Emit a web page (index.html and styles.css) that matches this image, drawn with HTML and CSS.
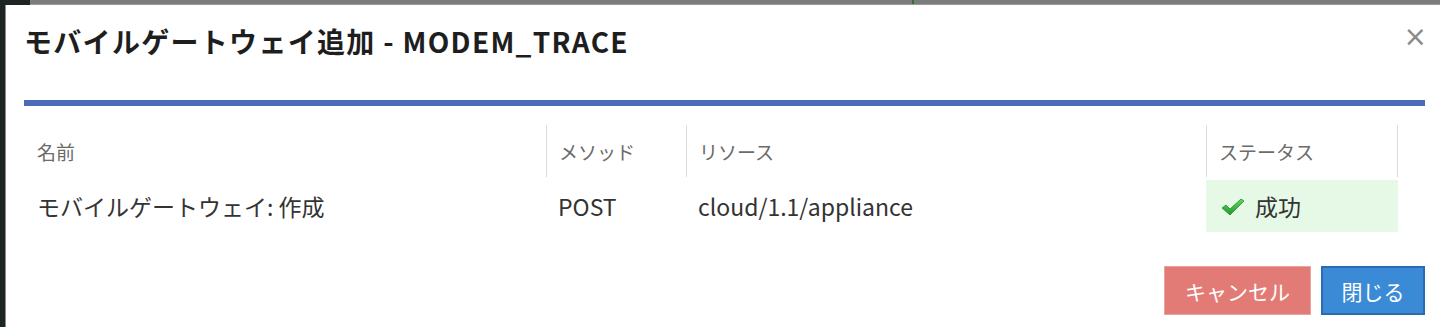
FILE: index.html
```html
<!DOCTYPE html>
<html lang="ja">
<head>
<meta charset="UTF-8">
<title>モバイルゲートウェイ追加</title>
<link rel="stylesheet" href="styles.css">
</head>
<body>
  <div class="topbar">
    <div class="topbar-dark"></div>
    <div class="topbar-gray"><span class="topbar-mark"></span></div>
  </div>
  <div class="main">
    <div class="side"></div>
    <div class="dialog">
      <div class="dialog-header">
        <h2 class="dialog-title">モバイルゲートウェイ追加 - MODEM_TRACE</h2>
        <span class="close">&times;</span>
      </div>
      <div class="progress"></div>
      <div class="result-table">
        <div class="row head">
          <div class="cell c-name">名前</div>
          <div class="cell c-method">メソッド</div>
          <div class="cell c-resource">リソース</div>
          <div class="cell c-status">ステータス</div>
        </div>
        <div class="row body">
          <div class="cell c-name">モバイルゲートウェイ: 作成</div>
          <div class="cell c-method">POST</div>
          <div class="cell c-resource">cloud/1.1/appliance</div>
          <div class="cell c-status ok">
            <svg class="check" width="24" height="20" viewBox="0 0 24 20">
              <defs>
                <linearGradient id="g" x1="0" y1="0" x2="0" y2="1">
                  <stop offset="0" stop-color="#5fd65f"/>
                  <stop offset="1" stop-color="#1f9a2a"/>
                </linearGradient>
              </defs>
              <path d="M1 11 L5 8 L9 12 L20 2 L23 4 L9 18 Z" fill="url(#g)" stroke="#2a8a2e" stroke-width="0.8" stroke-linejoin="round"/>
            </svg>
            成功
          </div>
        </div>
      </div>
      <div class="actions">
        <button class="btn btn-cancel">キャンセル</button>
        <button class="btn btn-close">閉じる</button>
      </div>
    </div>
  </div>
</body>
</html>
```

FILE: styles.css
```css
body {
  margin: 0;
  background: #1c2523;
  font-family: "Noto Sans CJK JP", sans-serif;
  height: 327px;
  overflow: hidden;
}
.topbar {
  display: flex;
  height: 5px;
}
.topbar-dark {
  width: 30px;
  background: #1c2523;
}
.topbar-gray {
  flex: 1;
  background: #7b7d7c;
  border-bottom: 1px solid #9a9a9a;
  box-sizing: border-box;
  padding-left: 882px;
}
.topbar-mark {
  display: block;
  width: 2px;
  height: 100%;
  background: #3d6b3d;
}
.main {
  display: flex;
  height: 322px;
}
.side {
  width: 5px;
  background: #1c2523;
  border-right: 1px solid #8c8c8c;
}
.dialog {
  flex: 1;
  background: #fff;
  padding: 0 15px 0 18px;
  display: flex;
  flex-direction: column;
}
.dialog-header {
  display: flex;
  justify-content: space-between;
  align-items: flex-start;
  height: 95px;
}
.dialog-title {
  margin: 16px 0 0;
  font-size: 28px;
  font-weight: bold;
  color: #1e1e1e;
  letter-spacing: 1.3px;
}
.close {
  margin-top: 18px;
  font-size: 28px;
  color: #8a8a8a;
  line-height: 1;
  font-family: "DejaVu Sans", sans-serif;
  margin-right: -2px;
}
.progress {
  height: 6px;
  background: #4a6cb8;
}
.result-table {
  margin-top: 19px;
  width: 1374px;
}
.row {
  display: flex;
  height: 52px;
}
.row.body {
  margin-top: 3px;
}
.cell {
  display: flex;
  align-items: center;
  padding-left: 13px;
  box-sizing: border-box;
  white-space: nowrap;
}
.head .cell {
  color: #6b6b6b;
  font-size: 19px;
}
.head .cell + .cell {
  border-left: 1px solid #dcdcdc;
}
.head .c-status {
  border-right: 1px solid #dcdcdc;
}
.body .cell {
  color: #333;
  font-size: 23px;
}
.c-name { width: 522px; }
.c-method { width: 140px; padding-left: 12px; }
.c-resource { width: 520px; padding-left: 12px; }
.c-status { width: 192px; padding-left: 12px; }
.ok {
  background: #e6f9e6;
  gap: 10px;
  padding-left: 15px;
}
.check {
  margin-top: 2px;
}
.actions {
  margin-top: 34px;
  display: flex;
  justify-content: flex-end;
  gap: 10px;
}
.btn {
  height: 49px;
  border: 1px solid transparent;
  color: #fff;
  font-family: "Noto Sans CJK JP", sans-serif;
  font-size: 21px;
  padding: 0 10px;
}
.btn-cancel {
  background: #e27b76;
  border-color: #eba3a0;
  width: 147px;
}
.btn-close {
  background: #3a8ad6;
  border: 2px solid #2a6cb3;
  width: 104px;
}
```
